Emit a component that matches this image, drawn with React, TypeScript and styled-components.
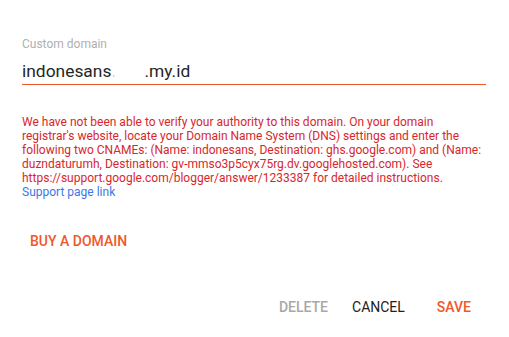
import React from "react";
import styled, { createGlobalStyle } from "styled-components";

const Global = createGlobalStyle`
  body {
    margin: 0;
    background: #fff;
    font-family: Roboto, "Liberation Sans", Arial, sans-serif;
  }
`;

const Dialog = styled.div`
  width: 509px;
  height: 337px;
  box-sizing: border-box;
  padding: 37px 23px 0 22px;
  display: flex;
  flex-direction: column;
`;

const Label = styled.label`
  font-size: 12px;
  color: #b0b0b0;
  line-height: 14px;
`;

const InputRow = styled.div`
  display: flex;
  align-items: baseline;
  margin-top: 10px;
  height: 23px;
  border-bottom: 1px solid #e85a26;
  font-size: 17.4px;
  line-height: 20px;
  color: #262626;
`;

const Redacted = styled.span`
  display: inline-block;
  width: 33px;
  color: #ccc;
`;

const ErrorText = styled.p`
  margin: 30px 0 0;
  font-size: 12px;
  line-height: 14px;
  color: #d9262b;
`;

const Link = styled.a`
  display: block;
  color: #3b78e7;
  text-decoration: none;
`;

const TextButton = styled.button<{ $tone: "accent" | "muted" | "plain" }>`
  background: none;
  border: none;
  padding: 0;
  font-family: inherit;
  font-size: 14px;
  font-weight: ${(p) => (p.$tone === "plain" ? 400 : 500)};
  cursor: pointer;
  color: ${(p) =>
    p.$tone === "accent" ? "#f0582a" : p.$tone === "muted" ? "#a8a8a8" : "#222"};
`;

const BuyRow = styled.div`
  margin-top: 32px;
  padding-left: 8px;
`;

const Footer = styled.div`
  margin-top: 47px;
  display: flex;
  justify-content: flex-end;
  gap: 24px;
  padding-right: 15px;
`;

const SaveSlot = styled.div`
  margin-left: 8px;
`;

export default function App() {
  return (
    <>
      <Global />
      <Dialog>
        <Label>Custom domain</Label>
        <InputRow>
          indonesans<Redacted>.</Redacted>.my.id
        </InputRow>
        <ErrorText>
          We have not been able to verify your authority to this domain. On your domain
          registrar's website, locate your Domain Name System (DNS) settings and enter the
          following two CNAMEs: (Name: indonesans, Destination: ghs.google.com) and (Name:
          duzndaturumh, Destination: gv-mmso3p5cyx75rg.dv.googlehosted.com). See
          https://support.google.com/blogger/answer/1233387 for detailed instructions.
          <Link href="#">Support page link</Link>
        </ErrorText>
        <BuyRow>
          <TextButton $tone="accent">BUY A DOMAIN</TextButton>
        </BuyRow>
        <Footer>
          <TextButton $tone="muted">DELETE</TextButton>
          <TextButton $tone="plain">CANCEL</TextButton>
          <SaveSlot>
            <TextButton $tone="accent">SAVE</TextButton>
          </SaveSlot>
        </Footer>
      </Dialog>
    </>
  );
}
